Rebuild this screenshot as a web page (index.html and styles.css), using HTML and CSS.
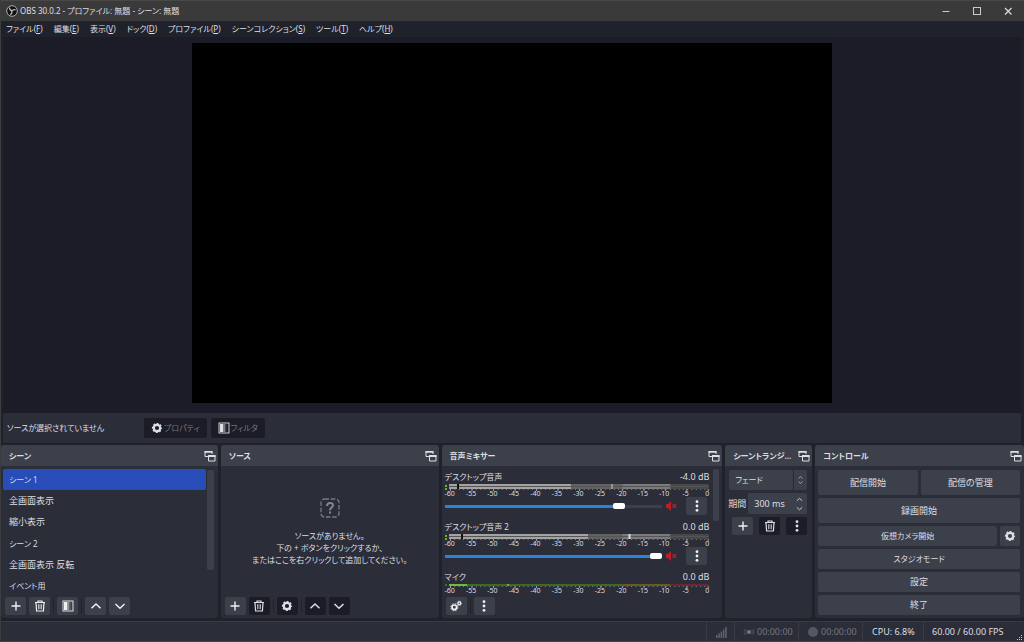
FILE: index.html
```html
<!DOCTYPE html>
<html lang="ja">
<head>
<meta charset="utf-8">
<title>OBS 30.0.2</title>
<link rel="stylesheet" href="styles.css">
</head>
<body>
<svg class="defs" aria-hidden="true">
  <symbol id="plus" viewBox="0 0 12 12"><path d="M6 1.5v9M1.5 6h9" stroke="currentColor" stroke-width="1.4" fill="none"/></symbol>
  <symbol id="trash" viewBox="0 0 12 12"><path d="M1 2.500h10M4 2.300V1h4v1.300M2 2.800l.6 8.200h6.800l.6-8.200" stroke="currentColor" stroke-width="1.200" fill="none"/><path d="M4.500 4.200v5M6 4.200v5M7.500 4.200v5" stroke="currentColor" stroke-width=".9" opacity=".8"/></symbol>
  <symbol id="filter" viewBox="0 0 12 12"><rect x="1" y="1" width="10" height="10" fill="none" stroke="currentColor" stroke-width=".9"/><path d="M2 2h3v8H2z" fill="currentColor"/><path d="M5 2h2v8H5z" fill="currentColor" opacity=".5"/><path d="M7 2h1.500v8H7z" fill="currentColor" opacity=".2"/></symbol>
  <symbol id="up" viewBox="0 0 12 12"><path d="M1.500 8.200L6 4l4.500 4.200" stroke="currentColor" stroke-width="1.500" fill="none"/></symbol>
  <symbol id="down" viewBox="0 0 12 12"><path d="M1.500 4L6 8.200 10.500 4" stroke="currentColor" stroke-width="1.500" fill="none"/></symbol>
  <symbol id="gear" viewBox="0 0 12 12"><circle cx="6" cy="6" r="3.200" fill="none" stroke="currentColor" stroke-width="2.200"/><circle cx="6" cy="6" r="4.500" fill="none" stroke="currentColor" stroke-width="1.200" stroke-dasharray="2.030 1.504" stroke-dashoffset="1"/></symbol>
  <symbol id="gears" viewBox="0 0 12 12"><circle cx="4.300" cy="7.300" r="2.300" fill="none" stroke="currentColor" stroke-width="1.700"/><circle cx="4.300" cy="7.300" r="3.500" fill="none" stroke="currentColor" stroke-dasharray="1.500 1.250"/><circle cx="9.300" cy="3.300" r="1.400" fill="none" stroke="currentColor" stroke-width="1.200"/><circle cx="9.300" cy="3.300" r="2.200" fill="none" stroke="currentColor" stroke-width=".8" stroke-dasharray="1 .73"/></symbol>
  <symbol id="dots" viewBox="0 0 12 12"><g fill="currentColor"><circle cx="6" cy="1.700" r="1.400"/><circle cx="6" cy="6" r="1.400"/><circle cx="6" cy="10.300" r="1.400"/></g></symbol>
  <symbol id="float" viewBox="0 0 12 12"><path d="M4 6.500H1V1.500h7V4" fill="none" stroke="currentColor"/><path d="M.5 1h8v1.700h-8zM4 5h7.500v2H4z" fill="currentColor"/><path d="M4.500 5.500h6.500v5.500h-6.500z" fill="none" stroke="currentColor"/></symbol>
  <symbol id="muted" viewBox="0 0 12 12"><path d="M1 4h2l3-3v10L3 8H1z" fill="#b8202c"/><path d="M7.500 4.200l3.600 3.600M11.100 4.200L7.500 7.800" stroke="#b8202c" stroke-width="1.300"/></symbol>
</svg>
<div class="window">
  <header class="titlebar">
    <svg class="logo" viewBox="0 0 12 12"><circle cx="6" cy="6" r="5.300" fill="#111" stroke="#bbb" stroke-width=".9"/><path d="M3.500 2.500c0 2 1 3 2.500 3.200M9.700 5C8 4.200 6.700 4.800 6 6.200M4.200 9.700c1.600-.8 2-2 1.500-3.600" fill="none" stroke="#bbb" stroke-width="1.200"/></svg>
    <span class="title compact">OBS 30.0.2 - プロファイル: 無題 - シーン: 無題</span>
    <button class="winbtn" aria-label="最小化"><svg viewBox="0 0 10 10"><path d="M1.500 5.500h7" stroke="#ccc"/></svg></button>
    <button class="winbtn" aria-label="最大化"><svg viewBox="0 0 10 10"><rect x="1.500" y="1.500" width="7" height="7" fill="none" stroke="#ccc"/></svg></button>
    <button class="winbtn" aria-label="閉じる"><svg viewBox="0 0 10 10"><path d="M2 2l6.500 6.500M8.500 2L2 8.500" stroke="#ddd" stroke-width="1.200"/></svg></button>
  </header>
  <nav class="menubar compact">
    <button>ファイル(<u>F</u>)</button><button>編集(<u>E</u>)</button><button>表示(<u>V</u>)</button><button>ドック(<u>D</u>)</button><button>プロファイル(<u>P</u>)</button><button>シーンコレクション(<u>S</u>)</button><button>ツール(<u>T</u>)</button><button>ヘルプ(<u>H</u>)</button>
  </nav>
  <main class="preview"><div class="canvas"></div></main>
  <section class="context compact">
    <span class="context-text">ソースが選択されていません</span>
    <button class="btn dark" disabled><svg class="icon"><use href="#gear"/></svg>プロパティ</button>
    <button class="btn dark" disabled><svg class="icon"><use href="#filter"/></svg>フィルタ</button>
  </section>
  <div class="docks">
    <section class="dock">
      <h2 class="dock-title"><span>シーン</span><svg class="icon"><use href="#float"/></svg></h2>
      <div class="scene-area">
        <ul class="scenes"><li class="selected compact">シーン 1</li><li>全画面表示</li><li>縮小表示</li><li class="compact">シーン 2</li><li>全画面表示 反転</li><li class="compact">イベント用</li></ul>
        <div class="scroll scene-scroll"></div>
      </div>
      <div class="toolbar">
        <button class="tool" aria-label="追加"><svg class="icon"><use href="#plus"/></svg></button>
        <button class="tool" aria-label="削除"><svg class="icon"><use href="#trash"/></svg></button>
        <i class="sep"></i>
        <button class="tool" aria-label="フィルタ"><svg class="icon"><use href="#filter"/></svg></button>
        <i class="sep"></i>
        <button class="tool" aria-label="上へ"><svg class="icon"><use href="#up"/></svg></button>
        <button class="tool" aria-label="下へ"><svg class="icon"><use href="#down"/></svg></button>
      </div>
    </section>
    <section class="dock">
      <h2 class="dock-title"><span>ソース</span><svg class="icon"><use href="#float"/></svg></h2>
      <div class="empty compact">
        <svg class="question" viewBox="0 0 20 20"><rect x="1" y="1" width="18" height="18" rx="3.500" fill="none" stroke="#777982" stroke-width="1.300" stroke-dasharray="4.500 1.800"/><path d="M7 8c0-4 6-4 6-.8 0 2.300-3 2.300-3 5" fill="none" stroke="#85878f" stroke-width="2"/><path d="M9 13.500h2v2H9z" fill="#85878f"/></svg>
        <p>ソースがありません。<br>下の + ボタンをクリックするか、<br>またはここを右クリックして追加してください。</p>
      </div>
      <div class="toolbar">
        <button class="tool" aria-label="追加"><svg class="icon"><use href="#plus"/></svg></button>
        <button class="tool dark" aria-label="削除"><svg class="icon"><use href="#trash"/></svg></button>
        <i class="sep"></i>
        <button class="tool dark" aria-label="設定"><svg class="icon"><use href="#gear"/></svg></button>
        <i class="sep"></i>
        <button class="tool dark" aria-label="上へ"><svg class="icon"><use href="#up"/></svg></button>
        <button class="tool dark" aria-label="下へ"><svg class="icon"><use href="#down"/></svg></button>
      </div>
    </section>
    <section class="dock">
      <h2 class="dock-title"><span>音声ミキサー</span><svg class="icon"><use href="#float"/></svg></h2>
      <div class="mixer">
        <div class="channels">
          <div class="channel">
            <div class="channel-head"><label class="compact" for="vol1">デスクトップ音声</label><span>-4.0 dB</span></div>
            <svg class="meter" viewBox="0 0 264 8" preserveAspectRatio="none">
              <path d="M0 1h2v2H0zM0 4h2v2H0z" fill="#62b52a"/>
              <path d="M4 0h122v5H4z" fill="#a3a3a3"/><path d="M126 0h99v5h-99z" fill="#626262"/><path d="M177 0h48v5h-48z" fill="#7b7b7b"/><path d="M225 0h38v5h-38z" fill="#484848"/><path d="M4 2h259v1H4z" fill="#555"/>
              <path d="M12 0h2v5h-2z" fill="#111"/><path d="M166 0h1v5h-1z" fill="#ccc"/>
              <path d="M5 5.500h258" stroke="#7e8088" stroke-dasharray="1 3.300"/><path d="M5 6h258" stroke="#a0a2a8" stroke-width="2" stroke-dasharray="1 20.420"/>
            </svg>
            <div class="scale"><span>-60</span><span>-55</span><span>-50</span><span>-45</span><span>-40</span><span>-35</span><span>-30</span><span>-25</span><span>-20</span><span>-15</span><span>-10</span><span>-5</span><span>0</span></div>
            <div class="controls-row"><input id="vol1" class="volume" type="range" min="0" max="100" value="82" style="--v:82%"><svg class="icon mute"><use href="#muted"/></svg><button class="tool" aria-label="メニュー"><svg class="icon"><use href="#dots"/></svg></button></div>
          </div>
          <div class="channel">
            <div class="channel-head"><label class="compact" for="vol2">デスクトップ音声 2</label><span>0.0 dB</span></div>
            <svg class="meter" viewBox="0 0 264 8" preserveAspectRatio="none">
              <path d="M0 1h2v2H0zM0 4h2v2H0z" fill="#62b52a"/>
              <path d="M4 0h139v5H4z" fill="#a3a3a3"/><path d="M143 0h82v5h-82z" fill="#626262"/><path d="M177 0h48v5h-48z" fill="#7b7b7b"/><path d="M225 0h38v5h-38z" fill="#484848"/><path d="M4 2h259v1H4z" fill="#555"/>
              <path d="M16 0h2v5h-2z" fill="#111"/><path d="M183 0h2v5h-2z" fill="#ddd"/>
              <path d="M5 5.500h258" stroke="#7e8088" stroke-dasharray="1 3.300"/><path d="M5 6h258" stroke="#a0a2a8" stroke-width="2" stroke-dasharray="1 20.420"/>
            </svg>
            <div class="scale"><span>-60</span><span>-55</span><span>-50</span><span>-45</span><span>-40</span><span>-35</span><span>-30</span><span>-25</span><span>-20</span><span>-15</span><span>-10</span><span>-5</span><span>0</span></div>
            <div class="controls-row"><input id="vol2" class="volume" type="range" min="0" max="100" value="100" style="--v:100%"><svg class="icon mute"><use href="#muted"/></svg><button class="tool" aria-label="メニュー"><svg class="icon"><use href="#dots"/></svg></button></div>
          </div>
          <div class="channel">
            <div class="channel-head"><span class="compact">マイク</span><span>0.0 dB</span></div>
            <svg class="meter mono" viewBox="0 0 264 5" preserveAspectRatio="none">
              <path d="M0 0h2v2H0z" fill="#3c6d20"/><path d="M4 0h173v2H4z" fill="#3d6b1e"/><path d="M177 0h48v2h-48z" fill="#6b5a1d"/><path d="M225 0h38v2h-38z" fill="#6e2530"/><path d="M4 0h18v2H4zM62 0h2v2h-2z" fill="#6cbf32"/>
              <path d="M5 2.500h258" stroke="#7e8088" stroke-dasharray="1 3.300"/><path d="M5 3h258" stroke="#a0a2a8" stroke-width="2" stroke-dasharray="1 20.420"/>
            </svg>
            <div class="scale"><span>-60</span><span>-55</span><span>-50</span><span>-45</span><span>-40</span><span>-35</span><span>-30</span><span>-25</span><span>-20</span><span>-15</span><span>-10</span><span>-5</span><span>0</span></div>
          </div>
        </div>
        <div class="scroll mixer-scroll"></div>
      </div>
      <div class="toolbar">
        <button class="tool" aria-label="詳細設定"><svg class="icon"><use href="#gears"/></svg></button>
        <i class="sep"></i>
        <button class="tool" aria-label="メニュー"><svg class="icon"><use href="#dots"/></svg></button>
      </div>
    </section>
    <section class="dock">
      <h2 class="dock-title"><span>シーントランジ...</span><svg class="icon"><use href="#float"/></svg></h2>
      <div class="transitions">
        <div class="combo"><select class="compact" aria-label="トランジション"><option>フェード</option></select><span class="arrows divided"><svg viewBox="0 0 12 12"><use href="#up"/></svg><svg viewBox="0 0 12 12"><use href="#down"/></svg></span></div>
        <div class="duration"><label for="dur">期間</label><div class="spin"><input id="dur" type="text" value="300 ms"><span class="arrows"><svg viewBox="0 0 12 12"><use href="#up"/></svg><svg viewBox="0 0 12 12"><use href="#down"/></svg></span></div></div>
        <div class="transition-tools">
          <button class="tool" aria-label="追加"><svg class="icon"><use href="#plus"/></svg></button>
          <button class="tool dark" aria-label="削除"><svg class="icon"><use href="#trash"/></svg></button>
          <button class="tool dark" aria-label="メニュー"><svg class="icon"><use href="#dots"/></svg></button>
        </div>
      </div>
    </section>
    <section class="dock">
      <h2 class="dock-title"><span>コントロール</span><svg class="icon"><use href="#float"/></svg></h2>
      <div class="controls">
        <div class="pair"><button class="btn tall">配信開始</button><button class="btn tall">配信の管理</button></div>
        <button class="btn tall">録画開始</button>
        <div class="pair"><button class="btn compact">仮想カメラ開始</button><button class="btn square" aria-label="仮想カメラ設定"><svg class="icon"><use href="#gear"/></svg></button></div>
        <button class="btn compact">スタジオモード</button>
        <button class="btn">設定</button>
        <button class="btn">終了</button>
      </div>
    </section>
  </div>
  <footer class="status">
    <span class="cell signal"><svg class="icon" viewBox="0 0 12 12"><path d="M1 9h1.500v3H1zM3.300 7.500h1.500V12H3.300zM5.600 5.500h1.500V12H5.600zM7.900 3.500h1.500V12H7.900zM10.200 1h1.500v11h-1.500z" fill="#62656f"/></svg></span>
    <span class="cell time"><svg class="icon" viewBox="0 0 12 12"><circle cx="6" cy="6" r="2" fill="#777a84"/><path d="M3.500 3.500a4 4 0 000 5M8.500 3.500a4 4 0 010 5M1.800 3a6 6 0 000 6M10.200 3a6 6 0 010 6" fill="none" stroke="#4a4d57"/></svg>00:00:00</span>
    <span class="cell time"><svg class="icon" viewBox="0 0 12 12"><circle cx="6" cy="6" r="5" fill="#555862"/></svg>00:00:00</span>
    <span class="cell cpu">CPU: 6.8%</span>
    <span class="cell fps">60.00 / 60.00 FPS<svg class="grip" viewBox="0 0 6 6"><path d="M4 0h1v1H4zM2 2h1v1H2zM4 2h1v1H4zM0 4h1v1H0zM2 4h1v1H2zM4 4h1v1H4z" fill="#ccc"/></svg></span>
  </footer>
</div>
</body>
</html>
```

FILE: styles.css
```css
* { box-sizing: border-box; }
body {
  margin: 0;
  font: 9px/12px "Noto Sans", "Noto Sans CJK JP", sans-serif;
  font-feature-settings: "palt";
  color: #dedfe3;
  background: #1f212b;
}
button, input, select {
  font: inherit;
  font-feature-settings: inherit;
  color: inherit;
  border: 0;
  margin: 0;
  padding: 0;
  background: none;
}
.compact { font-size: 8px; }
.defs { display: none; }
.window {
  display: flex;
  flex-direction: column;
  height: 100vh;
  overflow: hidden;
  border-left: 1px solid #3b3c40;
  border-bottom: 1px solid #44444a;
}
.titlebar {
  display: flex;
  align-items: center;
  flex: none;
  height: 21px;
  padding: 0 1px 1px 5px;
  background: #3a3a3a;
  border-top: 1px solid #484848;
}
.logo { width: 12px; height: 12px; margin-right: 2px; }
.title { flex: 1; }
.winbtn { width: 31px; height: 18px; display: grid; place-items: center; }
.winbtn svg { width: 10px; height: 10px; }
.menubar {
  display: flex;
  flex: none;
  gap: 11px;
  height: 16px;
  padding-left: 5px;
  background: #1f222b;
}
.preview {
  flex: 1;
  min-height: 0;
  display: flex;
  justify-content: center;
  margin: 0 3px 0 2px;
  padding: 6px 0 10px;
  background: #1b1c28;
}
.canvas { height: 100%; aspect-ratio: 16 / 9; background: #000; }
.context {
  display: flex;
  align-items: center;
  flex: none;
  gap: 4px;
  height: 30px;
  margin: 0 3px 2px 2px;
  padding-left: 4px;
  background: #2b2d38;
  border-radius: 2px;
}
.context-text { width: 133px; }
.btn {
  display: flex;
  align-items: center;
  justify-content: center;
  gap: 1px;
  height: 20px;
  padding: 0 7px;
  background: #3c404b;
  border-radius: 2px;
}
.icon { width: 12px; height: 12px; flex: none; display: block; }
.btn.dark { background: #1b1c28; color: #74767f; }
.btn.dark .icon { color: #dedfe3; }
.docks {
  display: grid;
  grid-template-columns: 217fr 218fr 281fr 87fr 209fr;
  grid-template-rows: minmax(0, 1fr);
  gap: 3px;
  flex: none;
  height: 173px;
}
.dock {
  display: flex;
  flex-direction: column;
  min-width: 0;
  background: #2b2d38;
  border-radius: 3px;
}
.dock-title {
  display: flex;
  align-items: center;
  justify-content: space-between;
  flex: none;
  height: 21px;
  margin: 0;
  padding: 0 2px 0 8px;
  font-size: 8px;
  font-weight: 600;
  white-space: nowrap;
  background: #3c404b;
  border-radius: 3px 3px 0 0;
}
.scene-area { display: flex; flex: 1; min-height: 0; padding: 3px 4px 0 2px; gap: 1px; }
.scenes { display: flex; flex-direction: column; flex: 1; margin: 0; padding: 0; list-style: none; }
.scenes li { display: flex; align-items: center; flex: 1; padding-left: 6px; border-radius: 2px; }
.scenes .selected { background: #284cb8; }
.scroll { flex: none; width: 7px; background: #3c404b; border-radius: 2px; }
.scene-scroll { height: 100px; margin-top: 1px; }
.toolbar { display: flex; flex: none; gap: 3px; padding: 0 4px 3px; }
.tool {
  display: grid;
  place-items: center;
  flex: none;
  width: 21px;
  height: 18px;
  background: #3c404b;
  border-radius: 2px;
  color: #f0f0f2;
}
.tool.dark { background: #1b1c28; color: #dedfe3; }
.sep { width: 1px; height: 14px; margin-top: 2px; background: #20222c; }
.empty {
  display: flex;
  flex-direction: column;
  align-items: center;
  justify-content: center;
  flex: 1;
  gap: 12px;
  text-align: center;
}
.empty p { margin: 0; }
.question { width: 20px; height: 20px; }
.mixer { display: flex; flex: 1; min-height: 0; gap: 4px; padding: 3px 3px 0; overflow: hidden; }
.channels { flex: 1; min-width: 0; }
.channel { height: 50px; padding-top: 2px; }
.channel-head { display: flex; justify-content: space-between; height: 13px; }
.meter { display: block; width: 100%; height: 8px; }
.meter.mono { height: 5px; }
.scale {
  display: flex;
  justify-content: space-between;
  height: 6px;
  margin: -1px -6px 0 -3px;
  font-size: 7px;
  line-height: 6px;
}
.scale span { width: 16px; text-align: center; }
.controls-row { display: flex; align-items: center; height: 18px; padding-right: 2px; }
.volume {
  flex: 1;
  min-width: 0;
  height: 6px;
  appearance: none;
  border-radius: 2px;
  background: linear-gradient(90deg, #2a82da var(--v), #3c404b var(--v)) center / 100% 3px no-repeat;
}
.volume::-webkit-slider-thumb { appearance: none; width: 12px; height: 6px; border-radius: 2px; background: #fff; }
.mute { margin: 0 9px 0 3px; }
.mixer-scroll { height: 52px; width: 6px; }
.transitions { display: flex; flex-direction: column; gap: 3px; padding: 4px 5px 0 3px; }
.combo, .spin { display: flex; border-radius: 2px; background: #3c404b; }
.combo { height: 20px; margin-left: 1px; }
.combo select { flex: 1; min-width: 0; padding-left: 6px; appearance: none; }
.arrows {
  display: flex;
  flex-direction: column;
  justify-content: center;
  align-items: center;
  gap: 2px;
  flex: none;
  width: 16px;
}
.arrows svg { width: 7px; height: 7px; }
.divided { width: 14px; border-left: 1px solid #262832; gap: 0; }
.divided svg { width: 5px; height: 5px; }
.duration { display: flex; align-items: center; gap: 2px; }
.duration label { flex: none; }
.spin { flex: 1; min-width: 0; height: 21px; }
.spin input { flex: 1; min-width: 0; padding-left: 6px; }
.transition-tools { display: flex; justify-content: space-between; padding-left: 4px; }
.controls { display: flex; flex-direction: column; gap: 3px; padding: 4px 4px 3px 3px; }
.pair { display: flex; gap: 3px; }
.pair .btn { flex: 1; }
.btn.tall { height: 25px; }
.pair .square { flex: none; width: 20px; padding: 0; }
.status {
  display: flex;
  justify-content: flex-end;
  flex: none;
  height: 20px;
  margin-top: 3px;
  background: #2b2d38;
  border-top: 1px solid #383b46;
}
.cell { display: flex; align-items: center; gap: 4px; padding: 0 8px; border-left: 1px solid #383b46; }
.time { width: 64px; color: #74767f; }
.time .icon { margin-right: -2px; }
.signal { width: 28px; }
.cpu { width: 61px; padding: 0 9px; white-space: nowrap; }
.fps { width: 101px; justify-content: space-between; padding-right: 1px; white-space: nowrap; }
.grip { width: 6px; height: 6px; align-self: flex-end; }
```
